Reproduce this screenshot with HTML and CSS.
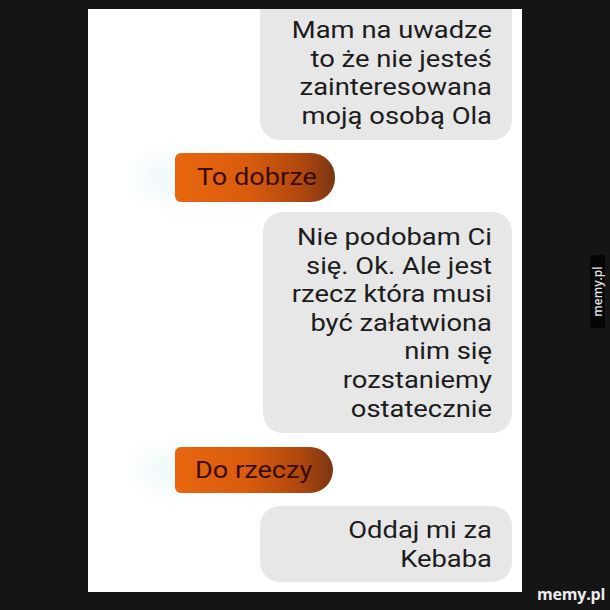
FILE: index.html
```html
<!DOCTYPE html>
<html lang="pl">
<head>
<meta charset="utf-8">
<link rel="stylesheet" href="styles.css">
</head>
<body>
<div class="stage">
  <div class="panel">
    <div class="bubble gray g1"><span class="txt">Mam na uwadze<br>to że nie jesteś<br>zainteresowana<br>moją osobą Ola</span></div>
    <div class="bubble orange o1"><span class="txt">To dobrze</span></div>
    <div class="bubble gray g2"><span class="txt">Nie podobam Ci<br>się. Ok. Ale jest<br>rzecz która musi<br>być załatwiona<br>nim się<br>rozstaniemy<br>ostatecznie</span></div>
    <div class="bubble orange o2"><span class="txt">Do rzeczy</span></div>
    <div class="bubble gray g3"><span class="txt">Oddaj mi za<br>Kebaba</span></div>
  </div>
  <div class="side-mark"><span>memy.pl</span></div>
  <div class="bottom-mark">memy.pl</div>
</div>
</body>
</html>
```
FILE: styles.css
```css
html, body {
  margin: 0;
  padding: 0;
  background: #151515;
}
.stage {
  position: relative;
  width: 610px;
  height: 610px;
  padding-top: 9px;
  box-sizing: border-box;
  background: #151515;
  overflow: hidden;
}
.panel {
  margin-left: 88px;
  width: 434px;
  height: 583px;
  box-sizing: border-box;
  background: #ffffff;
  padding-right: 10px;
  display: flex;
  flex-direction: column;
  font-family: Roboto, "Noto Sans", sans-serif;
}
.bubble {
  box-sizing: border-box;
}
.txt {
  display: block;
}
.gray {
  align-self: flex-end;
  background: #e7e7e7;
  color: #1c1c1c;
  text-align: right;
  font-size: 24px;
  line-height: 28.6px;
  border-radius: 20px;
  padding-right: 20px;
}
.gray .txt {
  transform: scaleX(1.14);
  transform-origin: right center;
}
.g1 {
  width: 252px;
  height: 131px;
  padding-top: 7px;
  border-top-left-radius: 0;
  border-top-right-radius: 0;
}
.g2 {
  width: 249px;
  height: 221px;
  margin-top: 10px;
  padding-top: 11px;
}
.g3 {
  width: 252px;
  height: 76px;
  margin-top: 13px;
  padding-top: 10px;
}
.orange {
  align-self: flex-start;
  margin-left: 87px;
  background: linear-gradient(90deg, #e8660f 0%, #d95c0e 45%, #ae470f 80%, #7a3612 100%);
  color: #3a0c08;
  font-size: 24px;
  border-radius: 6px 24px 24px 6px;
  padding-left: 22px;
  box-shadow: -40px 0 28px -10px rgba(205, 232, 242, 0.45);
}
.orange .txt {
  transform: scaleX(1.13);
  transform-origin: left center;
}
.o1 {
  width: 160px;
  height: 49px;
  line-height: 49px;
  margin-top: 13px;
}
.o2 {
  width: 158px;
  height: 46px;
  line-height: 46px;
  margin-top: 14px;
  padding-left: 20px;
}
.side-mark {
  position: absolute;
  left: 590px;
  top: 255px;
  width: 15px;
  height: 73px;
  background: #050505;
  display: flex;
  align-items: center;
  justify-content: center;
}
.side-mark span {
  display: block;
  transform: rotate(-90deg);
  white-space: nowrap;
  color: #e0e0e0;
  font-family: "Open Sans", "DejaVu Sans", sans-serif;
  font-size: 12px;
  font-weight: 600;
}
.bottom-mark {
  position: absolute;
  left: 537px;
  top: 583px;
  color: #ececec;
  font-family: "Open Sans", "DejaVu Sans", sans-serif;
  font-size: 16px;
  font-weight: 700;
  letter-spacing: -0.2px;
}
```
